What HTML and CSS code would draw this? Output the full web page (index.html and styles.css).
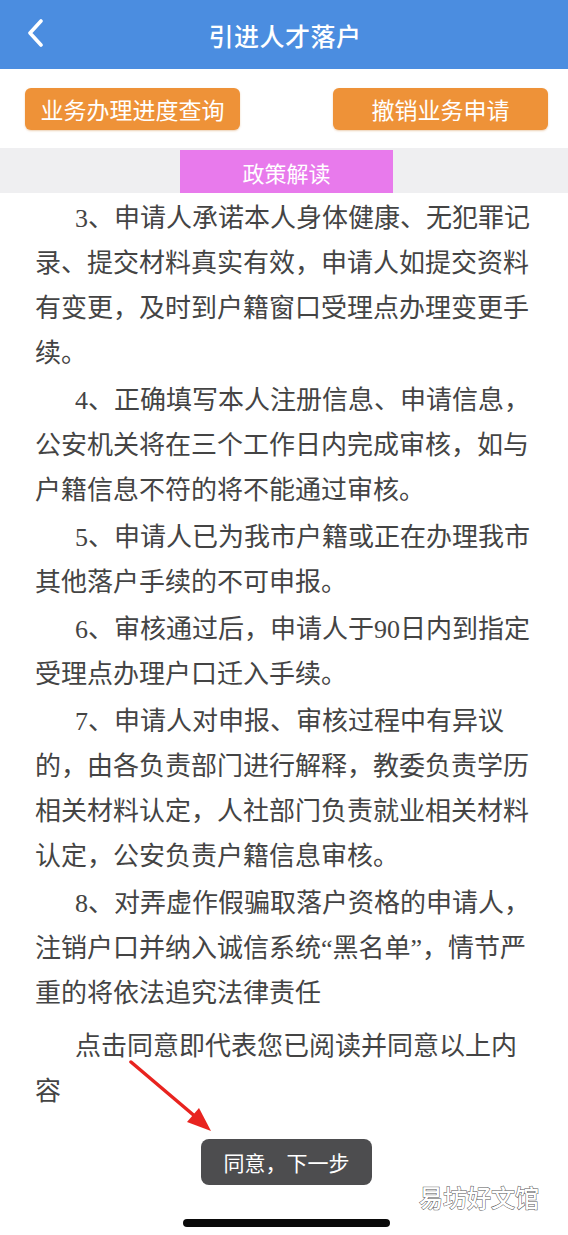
FILE: index.html
```html
<!DOCTYPE html>
<html lang="zh-CN">
<head>
<meta charset="utf-8">
<title>引进人才落户</title>
<link rel="stylesheet" href="styles.css">
</head>
<body>
<div class="page">
  <header class="topbar">
    <svg class="back" width="18" height="28" viewBox="0 0 18 28" aria-hidden="true">
      <path d="M15 2 L4 14 L15 26" fill="none" stroke="#ffffff" stroke-width="3.6" stroke-linecap="round" stroke-linejoin="round"/>
    </svg>
    <h1 class="title">引进人才落户</h1>
  </header>

  <div class="actions">
    <button class="btn">业务办理进度查询</button>
    <button class="btn">撤销业务申请</button>
  </div>

  <div class="tabs">
    <div class="tab">政策解读</div>
  </div>

  <div class="content">
    <p class="para">3、申请人承诺本人身体健康、无犯罪记<br>录、提交材料真实有效，申请人如提交资料<br>有变更，及时到户籍窗口受理点办理变更手<br>续。</p>
    <p class="para">4、正确填写本人注册信息、申请信息，<br>公安机关将在三个工作日内完成审核，如与<br>户籍信息不符的将不能通过审核。</p>
    <p class="para">5、申请人已为我市户籍或正在办理我市<br>其他落户手续的不可申报。</p>
    <p class="para">6、审核通过后，申请人于90日内到指定<br>受理点办理户口迁入手续。</p>
    <p class="para">7、申请人对申报、审核过程中有异议<br>的，由各负责部门进行解释，教委负责学历<br>相关材料认定，人社部门负责就业相关材料<br>认定，公安负责户籍信息审核。</p>
    <p class="para">8、对弄虚作假骗取落户资格的申请人，<br>注销户口并纳入诚信系统“黑名单”，情节严<br>重的将依法追究法律责任</p>
    <p class="para last">点击同意即代表您已阅读并同意以上内<br>容</p>
  </div>

  <div class="footer">
    <button class="agree">同意，下一步</button>
    <div class="home"></div>
  </div>

  <svg class="arrow" width="100" height="80" viewBox="0 0 100 80" aria-hidden="true">
    <path d="M2 2 L68 58" stroke="#e8231f" stroke-width="3.5" stroke-linecap="round"/>
    <path d="M82 71 L58 62 L70 48 Z" fill="#e8231f"/>
  </svg>
  <div class="watermark">易坊好文馆</div>
</div>
</body>
</html>
```

FILE: styles.css
```css
* { box-sizing: border-box; }
html, body { margin: 0; padding: 0; background: #ffffff; }
body { font-family: "Noto Sans CJK SC", "Liberation Sans", sans-serif; }

.page {
  position: relative;
  width: 568px;
  min-height: 1235px;
  display: flex;
  flex-direction: column;
}

.topbar {
  height: 69px;
  background: #4b8de0;
  display: flex;
  align-items: center;
  justify-content: center;
  position: relative;
}
.back {
  position: absolute;
  left: 26px;
  top: 19px;
}
.title {
  margin: 0;
  color: #ffffff;
  font-size: 25px;
  font-weight: 500;
  letter-spacing: 0.5px;
  padding-left: 2px;
}

.actions {
  display: flex;
  justify-content: space-between;
  padding: 19px 20px 0 25px;
  height: 79px;
}
.btn {
  width: 215px;
  height: 42px;
  border: none;
  border-radius: 6px;
  background: #ee9238;
  color: #ffffff;
  font-family: "Noto Sans CJK SC", sans-serif;
  font-size: 23px;
  padding: 0;
  box-shadow: 0 1px 2px rgba(200, 120, 40, 0.35);
}

.tabs {
  height: 45px;
  background: #efeff1;
  display: flex;
  justify-content: center;
  align-items: flex-end;
}
.tab {
  width: 213px;
  height: 43px;
  background: #e87aec;
  color: #ffffff;
  font-size: 22px;
  display: flex;
  align-items: center;
  justify-content: center;
  margin-left: 5px;
}

.content {
  padding: 3px 0 0 35px;
  color: #444444;
  font-family: "Liberation Serif", "Noto Sans CJK SC", serif;
  font-size: 26px;
  line-height: 45px;
}
.para {
  margin: 0 0 2px 0;
  white-space: nowrap;
  text-indent: 40px;
}
.para.last {
  margin-top: 5px;
  font-family: "Noto Sans CJK SC", sans-serif;
}

.footer {
  display: flex;
  flex-direction: column;
  align-items: center;
  padding-top: 26px;
  padding-left: 5px;
}
.agree {
  width: 171px;
  height: 46px;
  border: none;
  border-radius: 8px;
  background: #4d4d4f;
  color: #ffffff;
  font-family: "Noto Sans CJK SC", sans-serif;
  font-size: 21px;
  padding: 0;
}
.home {
  margin-top: 34px;
  width: 207px;
  height: 8px;
  border-radius: 4px;
  background: #0a0a0a;
}

.arrow {
  position: absolute;
  left: 129px;
  top: 1060px;
}
.watermark {
  position: absolute;
  left: 419px;
  top: 1180px;
  font-size: 24px;
  line-height: 34px;
  color: #ffffff;
  -webkit-text-stroke: 1px #555555;
  paint-order: stroke fill;
  font-weight: 500;
}
```
